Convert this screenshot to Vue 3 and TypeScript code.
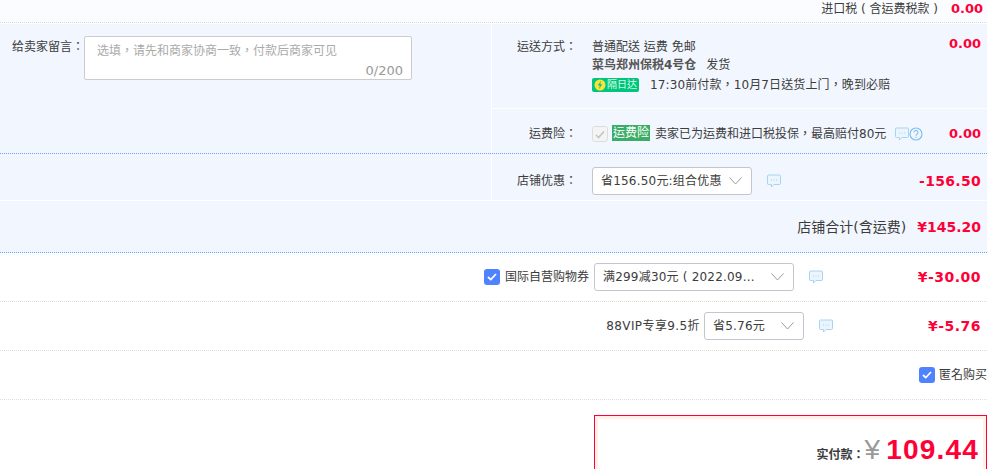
<script setup lang="ts">
const coupons = [
  { id: 'intl', checked: true, label: '国际自营购物券', value: '满299减30元 ( 2022.09...', width: 200, price: '¥-30.00' },
  { id: 'vip', checked: false, label: '88VIP专享9.5折', value: '省5.76元', width: 100, price: '¥-5.76' },
]
</script>

<template>
  <div class="order">
    <div class="tax-row">
      <span>进口税 ( 含运费税款 )</span>
      <b class="price small tax-price">0.00</b>
    </div>

    <section class="shop">
      <div class="shop-top">
        <div class="memo">
          <label class="memo-label">给卖家留言：</label>
          <div class="memo-box">
            <span class="memo-hint">选填，请先和商家协商一致，付款后商家可见</span>
            <span class="memo-count">0/200</span>
          </div>
        </div>
        <div class="delivery">
          <div class="ship">
            <span class="key ship-key">运送方式：</span>
            <div class="ship-body">
              <p>普通配送 运费 免邮</p>
              <p><strong>菜鸟郑州保税4号仓</strong><span class="dispatch">发货</span></p>
              <p class="next-day">
                <span class="badge">
                  <svg width="12" height="12" viewBox="0 0 12 12"><circle cx="6" cy="6" r="5.5" fill="#ffe13a" /><path d="M7 1.8 3.8 6.6h2l-.8 3.6 3.2-5h-2z" fill="#00c57c" /></svg>
                  隔日达
                </span>
                <span class="promise">17:30前付款，10月7日送货上门，晚到必赔</span>
              </p>
            </div>
            <b class="price small">0.00</b>
          </div>
          <div class="insure">
            <span class="key">运费险：</span>
            <span class="check-off">
              <svg width="10" height="9" viewBox="0 0 10 9"><path d="M1 5l2.6 2.6L9 1.5" fill="none" stroke="#c4c4c4" stroke-width="1.6" /></svg>
            </span>
            <span class="green-tag">运费险</span>
            <span class="insure-text">卖家已为运费和进口税投保，最高赔付80元</span>
            <svg class="chat" width="14" height="14" viewBox="0 0 14 14"><path d="M1.5 1h11a1 1 0 0 1 1 1v7.5a1 1 0 0 1-1 1H7l-2.5 2.5v-2.5h-3a1 1 0 0 1-1-1V2a1 1 0 0 1 1-1z" fill="#eaf5fd" stroke="#a6d4f2" /><path d="M4 6h1M6.5 6h1M9 6h1" stroke="#a6d4f2" /></svg>
            <svg class="help" width="14" height="14" viewBox="0 0 14 14"><circle cx="7" cy="7" r="6" fill="none" stroke="#7fc0ee" stroke-width="1.2" /><path d="M5 5.4a2 2 0 1 1 3.1 1.7c-.7.4-1.1.8-1.1 1.6M7 9.8v1.2" fill="none" stroke="#7fc0ee" stroke-width="1.1" /></svg>
            <b class="price small insure-price">0.00</b>
          </div>
        </div>
      </div>

      <div class="shop-promo">
        <div class="promo-left"></div>
        <div class="promo-right">
          <span class="key">店铺优惠：</span>
          <div class="select promo-select">
            <span>省156.50元:组合优惠</span>
            <svg class="arrow" width="13" height="8" viewBox="0 0 13 8"><path d="M.5.5l6 6.5 6-6.5" fill="none" stroke="#999" /></svg>
          </div>
          <svg class="chat" width="14" height="14" viewBox="0 0 14 14"><path d="M1.5 1h11a1 1 0 0 1 1 1v7.5a1 1 0 0 1-1 1H7l-2.5 2.5v-2.5h-3a1 1 0 0 1-1-1V2a1 1 0 0 1 1-1z" fill="#eaf5fd" stroke="#a6d4f2" /><path d="M4 6h1M6.5 6h1M9 6h1" stroke="#a6d4f2" /></svg>
          <b class="price promo-price">-156.50</b>
        </div>
      </div>

      <div class="shop-total">
        <span>店铺合计(含运费)</span>
        <b class="price">¥145.20</b>
      </div>
    </section>

    <div v-for="c in coupons" :key="c.id" class="coupon">
      <span v-if="c.checked" class="check-on">
        <svg width="10" height="8" viewBox="0 0 10 8"><path d="M1 4l2.8 2.6L9 1" fill="none" stroke="#fff" stroke-width="1.8" /></svg>
      </span>
      <span class="coupon-label" :class="{ 'vip-label': !c.checked }">{{ c.label }}</span>
      <div class="select" :style="{ width: c.width + 'px' }">
        <span>{{ c.value }}</span>
        <svg class="arrow" width="13" height="8" viewBox="0 0 13 8"><path d="M.5.5l6 6.5 6-6.5" fill="none" stroke="#999" /></svg>
      </div>
      <svg class="chat" width="14" height="14" viewBox="0 0 14 14"><path d="M1.5 1h11a1 1 0 0 1 1 1v7.5a1 1 0 0 1-1 1H7l-2.5 2.5v-2.5h-3a1 1 0 0 1-1-1V2a1 1 0 0 1 1-1z" fill="#eaf5fd" stroke="#a6d4f2" /><path d="M4 6h1M6.5 6h1M9 6h1" stroke="#a6d4f2" /></svg>
      <b class="price coupon-price">{{ c.price }}</b>
    </div>

    <div class="anon">
      <span class="check-on">
        <svg width="10" height="8" viewBox="0 0 10 8"><path d="M1 4l2.8 2.6L9 1" fill="none" stroke="#fff" stroke-width="1.8" /></svg>
      </span>
      <span>匿名购买</span>
    </div>

    <div class="pay-wrap">
      <div class="pay-box">
        <div class="pay-inner">
          <span class="pay-label">实付款：</span>
          <span class="pay-yen">¥</span>
          <b class="pay-amount">109.44</b>
        </div>
      </div>
    </div>
  </div>
</template>

<style>
html,
body {
  margin: 0;
  background: #fff;
  overflow: hidden;
}
</style>

<style scoped>
.order {
  width: 987px;
  height: 469px;
  overflow: hidden;
  font: 12px/16px "DejaVu Sans", "Noto Sans CJK TC", sans-serif;
  color: #3c3c3c;
}

p {
  margin: 0;
}

.price {
  color: #ff0036;
  font-size: 14px;
  font-weight: 700;
  font-family: "DejaVu Sans", sans-serif;
  text-align: right;
}

.price.small {
  font-size: 13px;
}

.tax-row {
  height: 23px;
  box-sizing: border-box;
  padding: 0 6px 4px 0;
  display: flex;
  justify-content: flex-end;
  align-items: center;
  gap: 13px;
  background: #fbfcff;
  border-bottom: 1px dotted #ddd;
}

.tax-price {
  width: 30px;
}

.shop {
  margin-top: 1px;
  background: #f2f7ff;
}

.shop-top {
  height: 129px;
  display: flex;
  border-bottom: 1px dotted #66a5ff;
}

.memo {
  width: 491px;
  flex: none;
  display: flex;
  align-items: flex-start;
  padding: 12px 0 0 12px;
  box-sizing: border-box;
}

.memo-label {
  width: 72px;
  flex: none;
  line-height: 20px;
  margin-top: 1px;
}

.memo-box {
  width: 328px;
  height: 44px;
  box-sizing: border-box;
  background: #fff;
  border: 1px solid #ccc;
  border-radius: 2px;
  padding: 6px 12px;
  position: relative;
  color: #aaa;
  line-height: 17px;
}

.memo-count {
  position: absolute;
  right: 8px;
  bottom: 0;
  color: #999;
  font-size: 13px;
}

.delivery {
  flex: 1;
  border-left: 1px solid #fff;
  min-width: 0;
}

.key {
  width: 85px;
  flex: none;
  text-align: right;
  color: #3c3c3c;
  margin-right: 15px;
}

.ship {
  height: 85px;
  box-sizing: border-box;
  padding: 12px 0 0;
  display: flex;
  align-items: flex-start;
  border-bottom: 1px solid #fff;
}

.ship-key {
  line-height: 20px;
  margin-top: 1px;
}

.ship-body {
  flex: 1;
  margin-top: 2px;
  line-height: 18px;
}

.ship-body strong {
  font-weight: 700;
  font-size: 12px;
  color: #555;
}

.dispatch {
  margin-left: 10px;
}

.next-day {
  display: flex;
  align-items: center;
  gap: 11px;
  margin-top: 2px;
}

.promise {
  letter-spacing: 0.12px;
}

.badge {
  width: 47px;
  height: 14px;
  border-radius: 2px;
  background: #00c57c;
  color: #d8ffe8;
  font-size: 10px;
  line-height: 14px;
  display: inline-flex;
  align-items: center;
  justify-content: center;
  gap: 1px;
}

.ship > .price {
  width: 60px;
  padding-right: 6px;
  line-height: 16px;
}

.insure {
  height: 44px;
  box-sizing: border-box;
  padding-top: 6px;
  display: flex;
  align-items: center;
}

.check-off {
  width: 14px;
  height: 14px;
  border: 1px solid #ddd;
  border-radius: 3px;
  background: #f4f4f4;
  display: inline-flex;
  align-items: center;
  justify-content: center;
  margin-right: 4px;
}

.green-tag {
  background: #3aad66;
  color: #fff;
  width: 38px;
  height: 16px;
  line-height: 16px;
  font-size: 12px;
  text-align: center;
  white-space: nowrap;
  margin-right: 5px;
  margin-top: -2px;
}

.insure-text {
  white-space: nowrap;
}

.insure .chat {
  margin-left: 9px;
}

.insure-price {
  margin-left: auto;
  padding-right: 6px;
}

.shop-promo {
  height: 45px;
  margin-top: 1px;
  display: flex;
  border-bottom: 1px solid #fff;
}

.promo-left {
  width: 491px;
  flex: none;
}

.promo-right {
  flex: 1;
  display: flex;
  align-items: center;
  box-sizing: border-box;
  padding-top: 7px;
  border-left: 1px solid #fff;
}

.select {
  height: 28px;
  box-sizing: border-box;
  background: #fff;
  border: 1px solid #c5c5d0;
  border-radius: 3px;
  padding: 0 8px;
  display: flex;
  align-items: center;
  justify-content: space-between;
  white-space: nowrap;
  letter-spacing: 0.2px;
}

.promo-select {
  width: 160px;
}

.arrow {
  flex: none;
  margin-right: 1px;
}

.promo-right .chat {
  margin-left: 15px;
}

.promo-price {
  margin-left: auto;
  padding-right: 6px;
  letter-spacing: 0.3px;
}

.shop-total {
  height: 51px;
  display: flex;
  justify-content: flex-end;
  align-items: center;
  gap: 11px;
  padding-right: 6px;
  border-bottom: 1px dotted #66a5ff;
  font-size: 14px;
}

.coupon {
  height: 49px;
  box-sizing: border-box;
  border-bottom: 1px dotted #ddd;
  display: flex;
  justify-content: flex-end;
  align-items: center;
  padding-right: 6px;
}

.check-on {
  width: 16px;
  height: 16px;
  border-radius: 3px;
  background: #4f82ff;
  display: inline-flex;
  align-items: center;
  justify-content: center;
  flex: none;
  margin-right: 5px;
}

.coupon-label {
  margin-right: 5px;
  white-space: nowrap;
}

.vip-label {
  letter-spacing: 0.4px;
  margin-right: 4px;
}

.coupon .chat {
  margin-left: 15px;
}

.coupon-price {
  width: 158px;
  flex: none;
  letter-spacing: 0.5px;
}

.coupon + .coupon .coupon-price {
  width: 148px;
}

.anon {
  height: 49px;
  box-sizing: border-box;
  border-bottom: 1px dotted #ddd;
  display: flex;
  justify-content: flex-end;
  align-items: center;
}

.anon .check-on {
  margin-right: 4px;
}

.pay-wrap {
  padding: 15px 0 0 594px;
}

.pay-box {
  height: 60px;
  box-sizing: border-box;
  border: 1px solid #ff0036;
  background: #fff;
  padding: 3px;
}

.pay-inner {
  height: 100%;
  box-shadow: 0 0 0 3px #fff0e8;
  display: flex;
  justify-content: flex-end;
  align-items: baseline;
  padding: 15px 4px 0 0;
  box-sizing: border-box;
}

.pay-label {
  font-weight: 700;
  color: #3c3c3c;
}

.pay-yen {
  font-size: 28px;
  color: #999;
  margin-right: 6px;
  font-family: "Liberation Sans", sans-serif;
}

.pay-amount {
  color: #ff0036;
  font: 700 28px "Liberation Sans", "DejaVu Sans", sans-serif;
  letter-spacing: 1.2px;
}
</style>
